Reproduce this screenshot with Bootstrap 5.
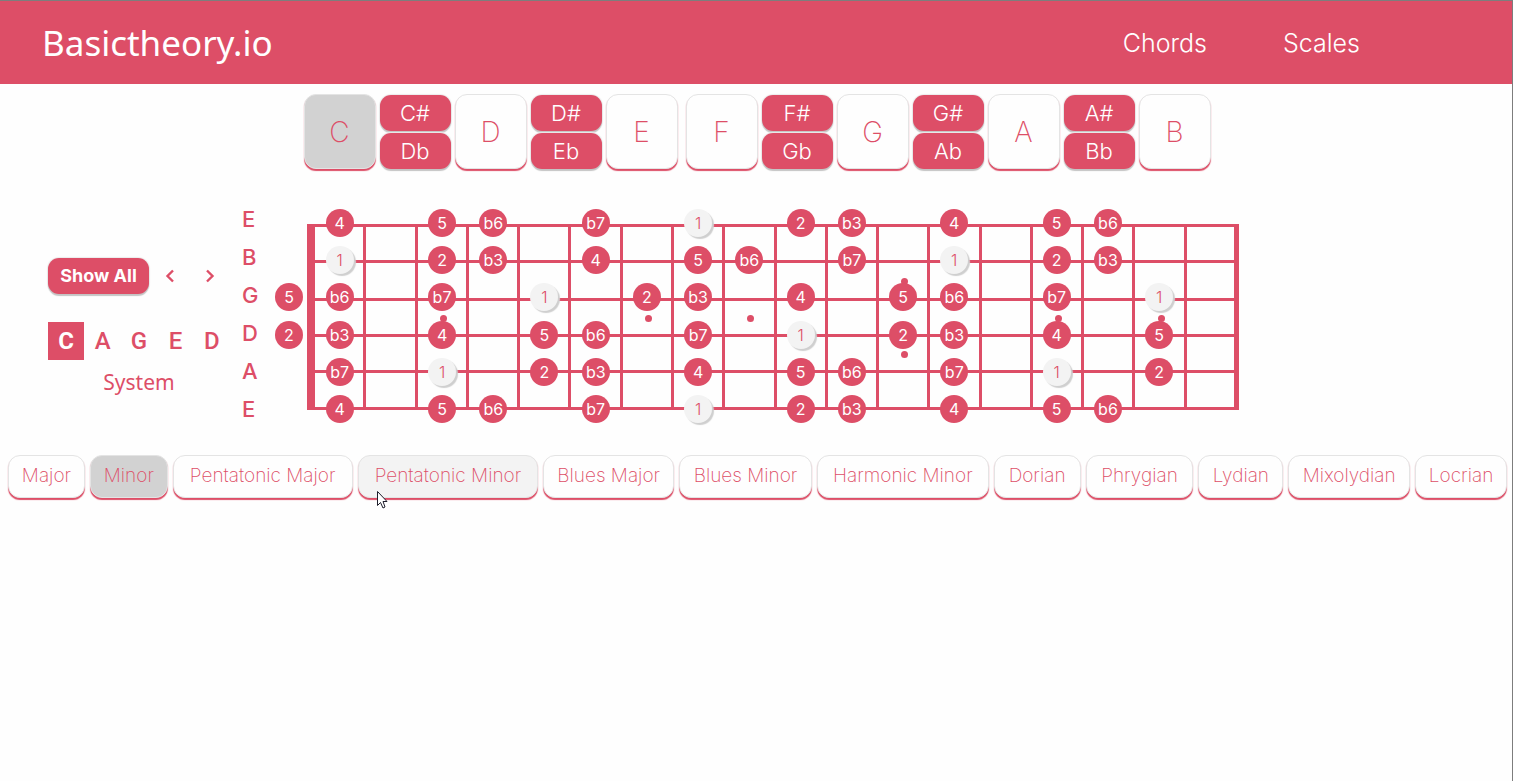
<!DOCTYPE html>
<html lang="en">
<head>
<meta charset="utf-8">
<meta name="viewport" content="width=device-width, initial-scale=1">
<title>Basictheory.io</title>
<link rel="stylesheet" href="https://cdn.jsdelivr.net/npm/bootstrap@5.3.0/dist/css/bootstrap.min.css">
<style>
:root { --brand: #dd4e67; --edge: #7d7d7d; --soft: #e4e4e4; --shade: #d2d2d2; }
body { font-family: Inter, "Open Sans", sans-serif; background: #fefefe; color: var(--brand); border-right: 1px solid var(--edge); }
.topbar { background: var(--brand); border-top: 1px solid var(--edge); height: 84px; padding: 0 152px 0 42px; }
.site-name { font-family: "Noto Sans", sans-serif; font-size: 35px; line-height: 48px; }
.site-name:hover { color: #fff; }
.topnav { gap: 76px; }
.topnav a { color: #fff; font-size: 25px; font-weight: 300; line-height: 32px; }

.tile { border: 1px solid var(--soft); border-radius: 12px; background: #fefefe; color: var(--brand); font-weight: 200; padding: 0; box-shadow: 0 2px 1px var(--brand); }
.tile.chosen { background: var(--shade); }
.tile.pointed { background: #f3f3f3; }
.solid-tile { border: 0; border-radius: 11px; background: var(--brand); color: #fff; padding: 0; box-shadow: 0 2px 1px #c4c4c4, 0 0 1px 1px #ececec; }

.keys { gap: 4px; padding: 10px 0 0 2px; }
.natural { width: 72px; height: 75px; font-size: 28px; line-height: 36px; }
.half-gap { margin-left: 4px; }
.accidental { width: 71px; gap: 2px; padding-top: 1px; }
.accidental button { height: 36px; font-size: 22px; font-weight: 300; line-height: 28px; }

.stage { margin-top: 31px; padding-right: 273px; }
.side { width: 242px; padding: 58px 0 0 48px; flex: none; }
.show-all { width: 101px; height: 36px; font-size: 18px; font-weight: 700; line-height: 24px; }
.arrow { width: 40px; height: 36px; padding: 0 0 0 2px; border: 0; background: none; color: var(--brand); display: flex; align-items: center; justify-content: center; }
.caged { margin-top: 28px; width: 182px; }
.caged button { width: 37px; height: 38px; border: 0; padding: 0; background: none; color: var(--brand); font: 500 24px/32px Roboto, sans-serif; }
.caged .on { background: var(--brand); color: #fff; font-weight: 700; }
.system { font-family: "Noto Sans", sans-serif; font-size: 21px; line-height: 28px; width: 182px; margin-top: 8px; }

.tuning { width: 22px; font-size: 22px; font-weight: 500; line-height: 38px; flex: none; }
.neck { display: grid; flex: 1; }
.neck > * { grid-area: 1 / 1; }
.board { margin: 24px 0 0 43px; align-self: start; border: solid var(--brand); border-width: 3px 1px 0 8px; display: grid; grid-template-columns: repeat(18, 1fr); grid-template-rows: 36px 38px 36px 36px 37px; }
.board span { border: solid var(--brand); border-width: 0 3px 3px 0; display: flex; align-items: center; justify-content: center; padding: 2px 0 0 3px; }
.board span:last-child, .board span:nth-child(18n) { border-right-width: 4px; }
.board i { width: 7px; height: 7px; border-radius: 50%; background: var(--brand); }
.notes { margin: 9px 3px 0 0; align-self: start; display: grid; grid-template-columns: 50px repeat(18, 1fr); grid-template-rows: 37px 37px 38px 37px 37px 28px; justify-items: center; align-items: start; }
.note { width: 28px; height: 28px; border-radius: 50%; background: var(--brand); color: #fff; font-size: 16px; line-height: 28px; text-align: center; }
.note.root { background: #f3f3f3; color: var(--brand); font-weight: 300; box-shadow: 2px 2px 1px #cfcfcf; }

.scales { display: grid; gap: 5px; margin: 27px 5px 0 8px; grid-template-columns: 77fr 78fr 180fr 181fr 131fr 133fr 172fr 87fr 108fr 85fr 122fr 92fr; }
.scales button { height: 43px; font-size: 19px; line-height: 24px; white-space: nowrap; padding-bottom: 2px; }
.pointer { position: absolute; left: 17px; top: 34px; }
</style>
</head>
<body class="min-vh-100">
<header class="topbar d-flex align-items-center justify-content-between">
  <a class="site-name text-white text-decoration-none" href="#">Basictheory.io</a>
  <nav class="topnav d-flex">
    <a class="text-decoration-none" href="#chords">Chords</a>
    <a class="text-decoration-none" href="#scales">Scales</a>
  </nav>
</header>

<main>
  <section class="keys d-flex justify-content-center align-items-start" aria-label="Root note">
    <button class="tile natural chosen">C</button>
    <div class="accidental d-flex flex-column"><button class="solid-tile">C#</button><button class="solid-tile">Db</button></div>
    <button class="tile natural">D</button>
    <div class="accidental d-flex flex-column"><button class="solid-tile">D#</button><button class="solid-tile">Eb</button></div>
    <button class="tile natural">E</button>
    <button class="tile natural half-gap">F</button>
    <div class="accidental d-flex flex-column"><button class="solid-tile">F#</button><button class="solid-tile">Gb</button></div>
    <button class="tile natural">G</button>
    <div class="accidental d-flex flex-column"><button class="solid-tile">G#</button><button class="solid-tile">Ab</button></div>
    <button class="tile natural">A</button>
    <div class="accidental d-flex flex-column"><button class="solid-tile">A#</button><button class="solid-tile">Bb</button></div>
    <button class="tile natural">B</button>
  </section>

  <section class="stage d-flex align-items-start">
    <div class="side">
      <div class="d-flex align-items-center">
        <button class="solid-tile show-all">Show All</button>
        <button class="arrow" aria-label="Previous"><svg width="12" height="14" viewBox="0 0 12 14" fill="none" stroke="currentColor" stroke-width="2.4"><path d="M9 1.5 3.5 7 9 12.5"/></svg></button>
        <button class="arrow" aria-label="Next"><svg width="12" height="14" viewBox="0 0 12 14" fill="none" stroke="currentColor" stroke-width="2.4"><path d="M3 1.5 8.5 7 3 12.5"/></svg></button>
      </div>
      <div class="caged d-flex justify-content-between">
        <button class="on">C</button><button>A</button><button>G</button><button>E</button><button>D</button>
      </div>
      <div class="system text-center">System</div>
    </div>
    <div class="tuning">
      <div>E</div><div>B</div><div>G</div><div>D</div><div>A</div><div>E</div>
    </div>
    <div class="neck">
      <div class="board" id="board"></div>
      <div class="notes" id="notes"></div>
    </div>
  </section>

  <section class="scales" aria-label="Scale">
    <button class="tile">Major</button>
    <button class="tile chosen">Minor</button>
    <button class="tile">Pentatonic Major</button>
    <button class="tile pointed position-relative">Pentatonic Minor<svg class="pointer" width="13" height="20" viewBox="0 0 13 20"><path d="M1.5 1.5V15.500L4.500 12.500 7 18 9 17 7 11.500H11Z" fill="#fff" stroke="#1d1d2b"/></svg></button>
    <button class="tile">Blues Major</button>
    <button class="tile">Blues Minor</button>
    <button class="tile">Harmonic Minor</button>
    <button class="tile">Dorian</button>
    <button class="tile">Phrygian</button>
    <button class="tile">Lydian</button>
    <button class="tile">Mixolydian</button>
    <button class="tile">Locrian</button>
  </section>
</main>

<script src="https://cdn.jsdelivr.net/npm/bootstrap@5.3.0/dist/js/bootstrap.bundle.min.js"></script>
<script>
// Inlay dots: gap between strings -> frets that carry one
const inlays = { 1: [12], 2: [3, 7, 9, 15, 17], 3: [12] };
const board = document.getElementById('board');
for (let row = 0; row < 5; row++)
  for (let fret = 1; fret <= 18; fret++) {
    const cell = document.createElement('span');
    if ((inlays[row] || []).includes(fret)) cell.append(document.createElement('i'));
    board.append(cell);
  }

// One entry per string, high E first: fret -> degree
const strings = [
  { 1: '4', 3: '5', 4: 'b6', 6: 'b7', 8: '1', 10: '2', 11: 'b3', 13: '4', 15: '5', 16: 'b6' },
  { 1: '1', 3: '2', 4: 'b3', 6: '4', 8: '5', 9: 'b6', 11: 'b7', 13: '1', 15: '2', 16: 'b3' },
  { 0: '5', 1: 'b6', 3: 'b7', 5: '1', 7: '2', 8: 'b3', 10: '4', 12: '5', 13: 'b6', 15: 'b7', 17: '1' },
  { 0: '2', 1: 'b3', 3: '4', 5: '5', 6: 'b6', 8: 'b7', 10: '1', 12: '2', 13: 'b3', 15: '4', 17: '5' },
  { 1: 'b7', 3: '1', 5: '2', 6: 'b3', 8: '4', 10: '5', 11: 'b6', 13: 'b7', 15: '1', 17: '2' },
  { 1: '4', 3: '5', 4: 'b6', 6: 'b7', 8: '1', 10: '2', 11: 'b3', 13: '4', 15: '5', 16: 'b6' }
];
const notes = document.getElementById('notes');
strings.forEach((degrees, row) => {
  for (const [fret, degree] of Object.entries(degrees)) {
    const note = document.createElement('div');
    note.className = degree === '1' ? 'note root' : 'note';
    note.textContent = degree;
    note.style.gridArea = `${row + 1} / ${+fret + 1}`;
    notes.append(note);
  }
});
</script>
</body>
</html>
